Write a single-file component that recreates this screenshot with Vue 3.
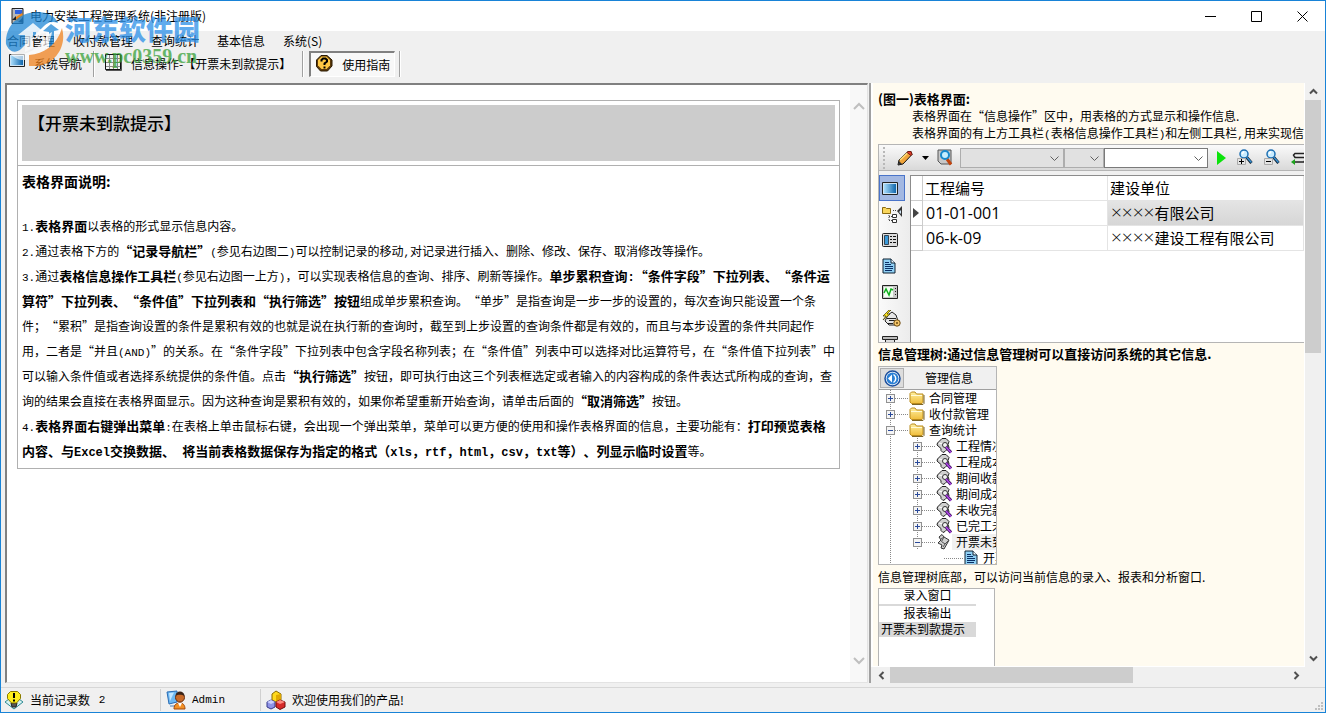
<template>
  <div class="win">
    <!-- Shared glyphs -->
    <svg class="defs" aria-hidden="true">
      <defs>
        <linearGradient id="g-blue" x1="0" y1="0" x2="1" y2="0">
          <stop offset="0" stop-color="#a9dcfa" />
          <stop offset="1" stop-color="#0f66ad" />
        </linearGradient>
        <linearGradient id="g-folder" x1="0" y1="0" x2="0" y2="1">
          <stop offset="0" stop-color="#fff0a0" />
          <stop offset="1" stop-color="#efbd3c" />
        </linearGradient>
        <symbol id="i-folder" viewBox="0 0 16 14">
          <path d="M1 11V2.5L2.5 1H6l1.5 2H14v8.5l-1 1H2.500z" fill="url(#g-folder)" stroke="#b98a1c" />
          <path d="M2 4.500H13" stroke="#fffbd8" />
          <path d="M15 4v8.500L14 13.500H3" fill="none" stroke="#7b6528" />
        </symbol>
        <symbol id="i-query" viewBox="0 0 16 16">
          <path d="M6 .5h4l3 3-1 3 1 3-4 4-2 1-2-2v-2L1 7l.5-2z" fill="#d0d0d0" stroke="#222" />
          <path d="M3 5l4 1 1 3" fill="none" stroke="#fff" />
          <circle cx="9" cy="7" r="2.500" fill="#f4f4f4" stroke="#333" />
          <path d="M10 9l5 5.500" stroke="#3b0a5c" stroke-width="3" />
          <path d="M10 9l5 5.500" stroke="#b14be8" stroke-width="1.500" />
        </symbol>
        <symbol id="i-scroll" viewBox="0 0 16 16">
          <path d="M3 3l3-2.500 2 2.500 5 3-1 2-4 7-3-1 1-3-4-2 3-3z" fill="#cfcfcf" stroke="#333" />
          <path d="M8 3L5.500 7.500 9 10l3-3M5 5l3-2M7 13l2-3" fill="none" stroke="#555" />
        </symbol>
        <symbol id="i-page" viewBox="0 0 14 16">
          <path d="M1 1h8l4 4v10H1z" fill="#8fd0f5" stroke="#123" />
          <path d="M9 1v4h4" fill="#e8f6ff" stroke="#123" />
          <path d="M3 4.500h4M3 6.500h6M3 8.500h8M3 10.500h8M3 12.500h7" stroke="#0a2f66" />
        </symbol>
        <symbol id="i-lens" viewBox="0 0 16 16">
          <path d="M9.500 8l5 6" stroke="#123" stroke-width="3" />
          <path d="M10 8.500l4.500 5" stroke="#3a93d6" stroke-width="1.500" />
          <circle cx="7" cy="5" r="4" fill="#c9ecff" stroke="#1d6fb3" stroke-width="1.500" />
          <path d="M5 5l2-2.500" stroke="#fff" stroke-width="1.500" />
        </symbol>
        <symbol id="i-screen" viewBox="0 0 16 13">
          <path d="M.5.500h15v12H.5z" fill="#cfe4f4" stroke="#222" />
          <path d="M2 2h12v9H2z" fill="url(#g-blue)" />
        </symbol>
      </defs>
    </svg>

    <header class="title-bar">
      <svg class="title-bar__icon" viewBox="0 0 13 16" aria-hidden="true">
        <path d="M1 .5h11v15H1z" fill="#b9b9b9" stroke="#222" />
        <path d="M4 1h7v5H4z" fill="#2f62e0" />
        <path d="M4 1h7v1H4z" fill="#cfe0ff" />
        <path d="M2 12l3-3 6-4 1 3-5 5z" fill="#f08a1c" />
        <path d="M1 12l4-4v4zM7 14l5-5v6z" fill="#222" />
      </svg>
      <span class="title-bar__text">电力安装工程管理系统(非注册版)</span>
      <button class="title-bar__btn" aria-label="最小化">
        <svg width="11" height="11" viewBox="0 0 11 11"><path d="M0 5.500h11" stroke="#000" /></svg>
      </button>
      <button class="title-bar__btn" aria-label="最大化">
        <svg width="11" height="11" viewBox="0 0 11 11"><path d="M.5.500h10v10H.5z" fill="none" stroke="#000" /></svg>
      </button>
      <button class="title-bar__btn" aria-label="关闭">
        <svg width="11" height="11" viewBox="0 0 11 11"><path d="M.5.500l10 10M10.500.500l-10 10" stroke="#000" /></svg>
      </button>
    </header>

    <nav class="menu-bar">
      <button v-for="item in menus" :key="item" class="menu-bar__item">{{ item }}</button>
    </nav>

    <div class="tool-bar">
      <button class="tool-bar__btn">
        <svg class="tool-bar__icon" width="16" height="13"><use href="#i-screen" /></svg>
        系统导航
      </button>
      <span class="tool-bar__sep"></span>
      <button class="tool-bar__btn">
        <svg class="tool-bar__icon" width="17" height="17" viewBox="0 0 17 17">
          <path d="M.5.500h15v15H.5z" fill="#f4f4f4" stroke="#111" />
          <path d="M1 4.500h14M1 8.500h14M1 12.500h14M4.500 1v14M8.500 1v14M12.500 1v14" stroke="#888" />
          <path d="M16.500 1v15.500H1" fill="none" stroke="#555" />
        </svg>
        信息操作-【开票未到款提示】
      </button>
      <span class="tool-bar__sep"></span>
      <button class="tool-bar__btn tool-bar__btn--pressed">
        <svg class="tool-bar__icon" width="17" height="17" viewBox="0 0 17 17">
          <path d="M5 .5h6L16 5v6l-4.500 5h-7L.5 11.500V5z" fill="#5d3a08" stroke="#2a1a04" />
          <path d="M5.500 1.500h5L14 5v5.500L10.500 14h-5L2 10.500V5z" fill="#ffc845" />
          <path d="M5.500 6.500V5L7 3.500h2.500L11 5v1.500L8.500 8.500V10M8.500 11.500v2" fill="none" stroke="#000" stroke-width="2" />
        </svg>
        使用指南
      </button>
      <span class="tool-bar__sep"></span>
    </div>

    <main class="panes">
      <section class="left">
        <article class="doc">
          <header class="doc__head"><h1 class="doc__title">【开票未到款提示】</h1></header>
          <div class="doc__body">
            <h2 class="doc__sub">表格界面说明:</h2>
            <p class="doc__text">
              <span class="en">1.</span><b>表格界面</b>以表格的形式显示信息内容。<br />
              <span class="en">2.</span>通过表格下方的<b>“记录导航栏”</b><span class="en">(</span>参见右边图二<span class="en">)</span>可以控制记录的移动<span class="en">,</span>对记录进行插入、删除、修改、保存、取消修改等操作。<br />
              <span class="en">3.</span>通过<b>表格信息操作工具栏</b><span class="en">(</span>参见右边图一上方<span class="en">)</span>，可以实现表格信息的查询、排序、刷新等操作。<b>单步累积查询<span class="en">:</span>“条件字段”下拉列表、“条件运</b><br />
              <b>算符”下拉列表、“条件值”下拉列表和“执行筛选”按钮</b>组成单步累积查询。“单步”是指查询是一步一步的设置的，每次查询只能设置一个条<br />
              件；“累积”是指查询设置的条件是累积有效的也就是说在执行新的查询时，截至到上步设置的查询条件都是有效的，而且与本步设置的条件共同起作<br />
              用，二者是“并且<span class="en">(AND)</span>”的关系。在“条件字段”下拉列表中包含字段名称列表；在“条件值”列表中可以选择对比运算符号，在“条件值下拉列表”中<br />
              可以输入条件值或者选择系统提供的条件值。点击<b>“执行筛选”</b>按钮，即可执行由这三个列表框选定或者输入的内容构成的条件表达式所构成的查询，查<br />
              询的结果会直接在表格界面显示。因为这种查询是累积有效的，如果你希望重新开始查询，请单击后面的<b>“取消筛选”</b>按钮。<br />
              <span class="en">4.</span><b>表格界面右键弹出菜单</b><span class="en">:</span>在表格上单击鼠标右键，会出现一个弹出菜单，菜单可以更方便的使用和操作表格界面的信息，主要功能有：<b>打印预览表格</b><br />
              <b>内容、与<span class="en">Excel</span>交换数据、<span class="en">&nbsp;</span>将当前表格数据保存为指定的格式（<span class="en">xls</span>，<span class="en">rtf</span>，<span class="en">html</span>，<span class="en">csv</span>，<span class="en">txt</span>等）、列显示临时设置</b>等。
            </p>
          </div>
        </article>
        <div class="left__scroll">
          <svg width="12" height="8" viewBox="0 0 12 8"><path d="M1 7l5-5 5 5" /></svg>
          <svg width="12" height="8" viewBox="0 0 12 8"><path d="M1 1l5 5 5-5" /></svg>
        </div>
      </section>

      <section class="right">
        <div class="guide">
          <h2 class="guide__title">(图一)表格界面:</h2>
          <p class="guide__line guide__line--indent">表格界面在“信息操作”区中，用表格的方式显示和操作信息.</p>
          <p class="guide__line guide__line--indent">表格界面的有上方工具栏<span class="en">(</span>表格信息操作工具栏<span class="en">)</span>和左侧工具栏<span class="en">,</span>用来实现信息操作</p>

          <div class="demo">
            <div class="demo__tools">
              <span class="demo__grip"></span>
              <button class="demo__tool demo__tool--pencil" aria-label="编辑">
                <svg width="16" height="16" viewBox="0 0 16 16">
                  <path d="M1 15l1-5 9-8.500h3l1 3L6 14z" fill="#f0a43a" stroke="#111" />
                  <path d="M3 10l8-7.500" stroke="#ffe07a" stroke-width="1.500" />
                  <path d="M11 1.500h3l1 3-1 1-4-3z" fill="#e0402c" stroke="#7a1a10" />
                  <path d="M1 15l1-4 3 3z" fill="#333" />
                </svg>
                <svg width="7" height="4" viewBox="0 0 7 4"><path d="M0 0h7L3.500 4z" fill="#000" /></svg>
              </button>
              <button class="demo__tool" aria-label="查找">
                <svg width="16" height="17" viewBox="0 0 16 17">
                  <path d="M1 1h13v14H4l-3-3z" fill="#c8c8c8" stroke="#555" />
                  <path d="M10 10l4 5.500" stroke="#c2440e" stroke-width="3" />
                  <circle cx="8" cy="6" r="4" fill="#c6efff" stroke="#1789cc" stroke-width="2" />
                </svg>
              </button>
              <div class="demo__combos">
                <span class="combo combo--field">
                  <select aria-label="条件字段" disabled></select>
                  <svg viewBox="0 0 9 6"><path d="M.5.500l4 4 4-4" /></svg>
                </span>
                <span class="combo combo--op">
                  <select aria-label="条件运算符" disabled></select>
                  <svg viewBox="0 0 9 6"><path d="M.5.500l4 4 4-4" /></svg>
                </span>
                <span class="combo combo--value">
                  <select aria-label="条件值"></select>
                  <svg viewBox="0 0 9 6"><path d="M.5.500l4 4 4-4" /></svg>
                </span>
              </div>
              <button class="demo__tool" aria-label="执行筛选">
                <svg width="9" height="14" viewBox="0 0 9 14"><path d="M0 0l9 7-9 7z" fill="#0be30b" /></svg>
              </button>
              <button class="demo__tool demo__tool--wide" aria-label="累积筛选">
                <svg width="16" height="17" viewBox="0 0 16 17">
                  <use href="#i-lens" width="16" height="16" />
                  <path d="M.5 9.500h8v6h-8z" fill="#e4e4e4" stroke="#aaa" />
                  <path d="M2 12.500h5M4.500 10v5" stroke="#000" />
                </svg>
              </button>
              <button class="demo__tool demo__tool--wide" aria-label="取消筛选">
                <svg width="16" height="17" viewBox="0 0 16 17">
                  <use href="#i-lens" width="16" height="16" />
                  <path d="M.5 9.500h8v6h-8z" fill="#e4e4e4" stroke="#aaa" />
                  <path d="M2 12.500h5" stroke="#000" />
                </svg>
              </button>
              <button class="demo__tool demo__tool--wide" aria-label="刷新">
                <svg width="16" height="14" viewBox="0 0 16 14">
                  <path d="M15 2.500H4L2.500 4 4 6.500h9l1.500 1.500-1.500 3H3" fill="none" stroke="#222" stroke-width="1.500" />
                  <path d="M4 8v6L0 11z" fill="#1ea31e" />
                </svg>
              </button>
            </div>

            <div class="demo__main">
              <div class="side">
                <button class="side__btn side__btn--on" aria-label="表格">
                  <svg width="16" height="13"><use href="#i-screen" /></svg>
                </button>
                <button class="side__btn" aria-label="结构">
                  <svg width="20" height="17" viewBox="0 0 20 17">
                    <path d="M.5 1.500h3l1 1h4v5h-8z" fill="#f9d65c" stroke="#8a6a10" />
                    <path d="M11 4.500h4M7 9v6M7 10.500h3M7 14.500h3" stroke="#444" stroke-dasharray="1 1" />
                    <path d="M10.500 8.500h4v3h-4zM10.500 13.500h4v3h-4z" fill="#fff" stroke="#333" />
                    <path d="M20 0l-5 5 5 6z" fill="#333" />
                    <path d="M19 4v4l-2-2z" fill="#cfe4f4" />
                  </svg>
                </button>
                <button class="side__btn" aria-label="卡片">
                  <svg width="16" height="14" viewBox="0 0 16 14">
                    <rect x=".5" y=".5" width="15" height="13" rx="1" fill="#dcdcdc" stroke="#222" />
                    <path d="M2.500 2.500h4v9h-4z" fill="#3b9ad9" stroke="#345" />
                    <path d="M8 3.500h2M11 3.500h3M8 6.500h2M11 6.500h3M8 9.500h2M11 9.500h3" stroke="#111" />
                  </svg>
                </button>
                <button class="side__btn" aria-label="报表">
                  <svg width="14" height="16"><use href="#i-page" /></svg>
                </button>
                <button class="side__btn" aria-label="图表">
                  <svg width="16" height="14" viewBox="0 0 16 14">
                    <path d="M.5.500h15v13H.5z" fill="#c9c9c9" stroke="#222" />
                    <path d="M2 2h9v10H2z" fill="#f2fff2" />
                    <path d="M2 8l2-4 3 6 2-6 2 1" fill="none" stroke="#0fae1c" stroke-width="1.500" />
                    <path d="M13.500 3v7" stroke="#222" stroke-dasharray="1 2" />
                  </svg>
                </button>
                <button class="side__btn" aria-label="打印">
                  <svg width="19" height="17" viewBox="0 0 19 17">
                    <path d="M6 5l4-3 4 3 2 6-3 4H7l-4-4z" fill="#e6e6e6" stroke="#222" />
                    <path d="M5 8.500h9M7 10.500h6M6 13.500h5" stroke="#222" />
                    <path d="M7 0L1 6h3L1 10l7-6H5l4-4z" fill="#ffe520" stroke="#3a3200" stroke-width=".7" />
                    <circle cx="15" cy="13" r="3.200" fill="#f5c66a" stroke="#6b4a12" />
                    <circle cx="15" cy="13" r="1" fill="#6b4a12" />
                  </svg>
                </button>
                <button class="side__btn" aria-label="导出">
                  <svg width="16" height="16" viewBox="0 0 16 16">
                    <path d="M.5.500h15v3H.5z" fill="#bbb" stroke="#222" />
                    <path d="M3.500 3.500h9v12h-9z" fill="#ddd" stroke="#222" />
                    <path d="M5 6.500h6M5 8.500h6" stroke="#444" />
                  </svg>
                </button>
              </div>

              <div class="grid">
                <table class="grid__table">
                  <thead>
                    <tr><th class="grid__mark"></th><th class="grid__code">工程编号</th><th>建设单位</th></tr>
                  </thead>
                  <tbody>
                    <tr v-for="(row, i) in rows" :key="row.code">
                      <td class="grid__mark">
                        <svg v-if="i === 0" width="6" height="10" viewBox="0 0 6 10"><path d="M0 0l6 5-6 5z" fill="#444" /></svg>
                      </td>
                      <td class="grid__code">{{ row.code }}</td>
                      <td class="grid__unit" :class="{ 'grid__unit--on': i === 0 }"><span class="grid__x">××××</span>{{ row.unit }}</td>
                    </tr>
                  </tbody>
                </table>
              </div>
            </div>
          </div>

          <h2 class="guide__title guide__title--tight">信息管理树:通过信息管理树可以直接访问系统的其它信息.</h2>

          <div class="tree">
            <div class="tree__head">
              <button class="tree__back" aria-label="返回">
                <svg width="17" height="17" viewBox="0 0 17 17">
                  <circle cx="8.500" cy="8.500" r="7.500" fill="#fff" stroke="#1c4f9e" stroke-width="1.500" />
                  <circle cx="8.500" cy="8.500" r="6" fill="#2b7fd4" />
                  <path d="M8 4.500v8l-4-4z" fill="#fff" />
                  <path d="M9.500 4.500c3 2 3 6 0 8" fill="none" stroke="#fff" stroke-width="1.500" />
                </svg>
              </button>
              <span class="tree__caption">管理信息</span>
            </div>
            <ul class="tree__list">
              <li v-for="node in tree" :key="node.text + node.level" class="tree__row" :class="['tree__row--l' + node.level, { 'tree__row--on': node.on }]">
                <span v-if="node.level < 2" class="tree__box"><i v-if="!node.open"></i></span>
                <span class="tree__dots"></span>
                <svg class="tree__icon"><use :href="'#i-' + node.icon" /></svg>
                <span class="tree__text">{{ node.text }}</span>
              </li>
            </ul>
          </div>

          <p class="guide__line guide__line--foot">信息管理树底部，可以访问当前信息的录入、报表和分析窗口.</p>

          <ul class="links">
            <li class="links__item">录入窗口</li>
            <li class="links__item links__item--line">报表输出</li>
            <li class="links__item links__item--on">开票未到款提示</li>
          </ul>
        </div>

        <div class="bar bar--v">
          <svg width="9" height="7" viewBox="0 0 9 7"><path d="M1 5.500L4.500 2 8 5.500" /></svg>
          <div class="bar__track"><div class="bar__thumb"></div></div>
          <svg width="9" height="7" viewBox="0 0 9 7"><path d="M1 1.500L4.500 5 8 1.500" /></svg>
        </div>
        <div class="bar bar--h">
          <svg width="7" height="9" viewBox="0 0 7 9"><path d="M5.500 1L2 4.500 5.500 8" /></svg>
          <div class="bar__track"><div class="bar__thumb"></div></div>
          <svg width="7" height="9" viewBox="0 0 7 9"><path d="M1.500 1L5 4.500 1.500 8" /></svg>
        </div>
      </section>
    </main>

    <footer class="status">
      <div class="status__cell">
        <svg width="20" height="20" viewBox="0 0 20 20">
          <path d="M1 12l4-3h10l4 3-9 7z" fill="#d6f3f3" stroke="#2f8a93" />
          <path d="M7 13h6l-1 4H8z" fill="#555" stroke="#222" />
          <path d="M6.500 1.500h7l3 3v4l-4 4.500h-5L3.500 8.500v-4z" fill="#ffee1c" stroke="#8a7a00" />
          <path d="M10 3v5M10 9.500v2" stroke="#000" stroke-width="2" />
        </svg>
        当前记录数&nbsp;<span class="en">2</span>
      </div>
      <div class="status__cell">
        <svg width="20" height="20" viewBox="0 0 20 20">
          <path d="M1 2l10-1v11L3 14z" fill="#6db8f2" stroke="#2a6cb4" />
          <path d="M3 3l5-.5L4 11z" fill="#c3e6ff" />
          <path d="M4 15h6v2H4z" fill="#9db8d6" />
          <path d="M8 19c0-5 3-6 6-6s5 2 5 6z" fill="#f39024" stroke="#a3480a" />
          <path d="M12 13l2 4 2-4z" fill="#fff" />
          <circle cx="14" cy="7.500" r="4.500" fill="#c96a28" stroke="#6b2d0a" />
          <path d="M9.500 6c0-6 9-6 9 0-2-1-6-2-9 0z" fill="#3c2418" />
        </svg>
        <span class="en">Admin</span>
      </div>
      <div class="status__cell status__cell--grow">
        <svg width="20" height="20" viewBox="0 0 20 20">
          <path d="M6 4l4-3 5 3v6l-5 2-4-2z" fill="#ffd91c" stroke="#8a6a00" />
          <path d="M10 5l5-1v6l-5 2z" fill="#e0a800" />
          <path d="M1 12l4-2 4 2v5l-4 2-4-2z" fill="#8f93e6" stroke="#35388a" />
          <path d="M1 12l4 2 4-2-4-2z" fill="#ccd0ff" />
          <path d="M10 12l4-2 5 2v5l-5 2.500-4-2.500z" fill="#d62a2a" stroke="#6e0d0d" />
          <path d="M10 12l4 2 5-2-5-2z" fill="#ff8a80" />
        </svg>
        欢迎使用我们的产品!
      </div>
      <svg class="status__grip" width="9" height="9" viewBox="0 0 9 9">
        <path d="M6 0h2v2H6zM3 3h2v2H3zM6 3h2v2H6zM0 6h2v2H0zM3 6h2v2H3zM6 6h2v2H6z" fill="#bfbfbf" />
      </svg>
    </footer>

    <!-- Site stamp lying over the title and menu -->
    <div class="stamp">
      <svg class="stamp__logo" width="60" height="58" viewBox="0 0 60 58">
        <path d="M1 33C0 15 14 1 32 1c11 0 18 4 21 11-5-2-10-1-14 3L16 38c-6 5-12 3-15-5z" fill="#1f87d6" />
        <path d="M13 24l15-12 12 10-5 1v4h-4v-6h-3v16l-8 4V24z" fill="#fff" opacity=".85" />
        <path d="M36 21l9-10 12 8-2 4h-5v14l-9 5V22z" fill="#fff" />
        <path d="M38 20l8-7 8 6-5 1v15l-5 3V21z" fill="#1f87d6" />
        <path d="M2 36c7 11 24 9 36-6 3-4 6-8 9-9-3 18-15 29-30 28C9 48 4 43 2 36z" fill="#fff" opacity=".85" />
        <path d="M57 17c5 18-6 35-24 38h-9V44c15-1 28-10 33-27z" fill="#f08320" />
      </svg>
      <div class="stamp__words">
        <span class="stamp__name">河东软件园</span>
        <span class="stamp__url">www.pc0359.cn</span>
      </div>
    </div>
  </div>
</template>

<script setup>
const menus = ['合同管理', '收付款管理', '查询统计', '基本信息', '系统(S)']

const rows = [
  { code: '01-01-001', unit: '有限公司' },
  { code: '06-k-09', unit: '建设工程有限公司' },
]

const tree = [
  { level: 0, icon: 'folder', text: '合同管理' },
  { level: 0, icon: 'folder', text: '收付款管理' },
  { level: 0, icon: 'folder', text: '查询统计', open: true },
  { level: 1, icon: 'query', text: '工程情况' },
  { level: 1, icon: 'query', text: '工程成本' },
  { level: 1, icon: 'query', text: '期间收款' },
  { level: 1, icon: 'query', text: '期间成本' },
  { level: 1, icon: 'query', text: '未收完款' },
  { level: 1, icon: 'query', text: '已完工未' },
  { level: 1, icon: 'scroll', text: '开票未到', open: true, on: true },
  { level: 2, icon: 'page', text: '开票' },
]
</script>

<style>
body {
  margin: 0;
}
</style>

<style scoped>
.win, .win * {
  box-sizing: border-box;
}
.win {
  position: relative;
  display: flex;
  flex-direction: column;
  height: 100vh;
  min-height: 600px;
  border: 1px solid #1883d7;
  background: #f0f0f0;
  color: #000;
  font: 12px/16px 'Noto Sans CJK SC', sans-serif;
  text-spacing-trim: space-all;
  white-space: nowrap;
  overflow: hidden;
}
.defs {
  position: absolute;
  width: 0;
  height: 0;
}
button {
  margin: 0;
  padding: 0;
  border: 0;
  background: none;
  color: inherit;
  font: inherit;
}
svg {
  display: block;
  flex: none;
}
h1, h2, p, ul {
  margin: 0;
  padding: 0;
  list-style: none;
}
/* Zero line height keeps mixed runs from stretching their line */
.en {
  font-family: 'Liberation Mono', monospace;
  font-size: 11px;
  line-height: 0;
}
b .en {
  font-size: 12px;
}

/* Title, menu and tool bars */
.title-bar {
  display: flex;
  align-items: center;
  height: 30px;
  padding-left: 10px;
  background: #fff;
}
.title-bar__icon {
  width: 13px;
  height: 16px;
}
.title-bar__text {
  flex: 1;
  padding-left: 6px;
}
.title-bar__btn {
  display: flex;
  justify-content: center;
  width: 46px;
}
.menu-bar {
  display: flex;
  gap: 18px;
  align-items: center;
  height: 20px;
  padding-left: 6px;
}
.tool-bar {
  display: flex;
  align-items: flex-start;
  height: 32px;
  padding-left: 8px;
}
.tool-bar__btn {
  display: flex;
  gap: 9px;
  align-items: flex-start;
  height: 26px;
  padding: 5px 11px 0 0;
}
.tool-bar__icon {
  margin-top: -2px;
}
.tool-bar__sep {
  width: 2px;
  height: 26px;
  border-left: 1px solid #a0a0a0;
  border-right: 1px solid #fff;
}
.tool-bar__sep + .tool-bar__btn {
  padding-left: 10px;
}
.tool-bar__sep + .tool-bar__btn--pressed {
  margin: 0 4px 0 5px;
  padding: 4px 4px 0 5px;
  border: 1px solid #fff;
  border-top: 2px solid #808080;
  border-left: 2px solid #808080;
  background: #f8f8f8;
}

/* Two panes */
.panes {
  display: grid;
  grid-template-columns: minmax(0, 863fr) minmax(0, 456fr);
  gap: 1px;
  flex: 1;
  min-height: 0;
  padding: 0 0 4px 4px;
}
.left {
  display: flex;
  min-height: 0;
  border: 1px solid #e3e3e3;
  border-top: 2px solid #808080;
  border-left: 2px solid #808080;
  background: #fff;
}
.left__scroll {
  display: flex;
  flex-direction: column;
  justify-content: space-between;
  align-items: center;
  width: 17px;
  padding: 17px 0;
  background: #f8f8f8;
}
.left__scroll path {
  fill: none;
  stroke: #bfbfbf;
  stroke-width: 2;
}
.doc {
  flex: 1;
  align-self: flex-start;
  min-width: 0;
  margin: 15px 10px 0;
  border: 1px solid #b0b0b0;
}
.doc__head {
  padding: 4px;
  border-bottom: 1px solid #b0b0b0;
}
.doc__title {
  height: 56px;
  padding: 6px;
  background: #ccc;
  font-size: 17px;
  line-height: 24px;
  font-weight: 500;
}
.doc__body {
  padding: 3px 4px 5px;
}
.doc__sub {
  margin-bottom: 20px;
  font-size: 14px;
  line-height: 24px;
}
.doc__text {
  line-height: 25px;
}
.doc__text b {
  font-size: 13px;
  line-height: 0;
}

/* Guide pane */
.right {
  display: grid;
  grid-template-columns: minmax(0, 1fr) 16px;
  grid-template-rows: minmax(0, 1fr) 16px;
  min-height: 0;
  padding-right: 4px;
  border-left: 2px solid #a0a0a0;
}
.guide {
  padding: 8px 0 0 5px;
  border-left: 2px solid #fff;
  border-right: 1px solid #fff;
  border-bottom: 1px solid #fff;
  background: #fffbf0;
  overflow: hidden;
}
.guide__title {
  font-size: 13px;
  line-height: 16px;
}
.guide__title--tight {
  height: 23px;
  padding-top: 3px;
}
.guide__line {
  line-height: 17px;
}
.guide__line--indent {
  padding-left: 34px;
}
.guide__line--foot {
  padding: 3px 0;
}
.demo {
  height: 199px;
  margin-top: 3px;
  border: 1px solid #b5b5b5;
  border-right: 0;
  background: #f0f0f0;
  overflow: hidden;
}
.demo__tools {
  display: flex;
  align-items: center;
  height: 26px;
  border-bottom: 1px solid #b5b5b5;
  background: linear-gradient(#fafafa, #d9d9d9);
}
.demo__grip {
  width: 2px;
  height: 22px;
  margin: 0 12px 0 4px;
  border-left: 2px dotted #b8b8b8;
}
.demo__tool--pencil {
  display: flex;
  gap: 9px;
  align-items: center;
  margin-right: 8px;
}
.demo__combos {
  display: flex;
  margin: 0 9px 0 7px;
}
.combo {
  position: relative;
  height: 20px;
}
.combo select {
  display: block;
  width: 100%;
  height: 100%;
  border: 1px solid #adadad;
  border-radius: 0;
  background: #e1e1e1;
  appearance: none;
  opacity: 1;
}
.combo svg {
  position: absolute;
  top: 8px;
  right: 5px;
  width: 9px;
  height: 6px;
  pointer-events: none;
}
.combo path {
  fill: none;
  stroke: #606060;
}
.combo--field {
  width: 104px;
}
.combo--op {
  width: 40px;
}
.combo--value {
  width: 104px;
}
.combo--value select {
  border-color: #7a7a7a;
  background: #fff;
}
.demo__tool--wide {
  margin-left: 11px;
}
.demo__main {
  display: flex;
  height: 172px;
  padding-top: 4px;
}
.side {
  width: 31px;
  background: linear-gradient(90deg, #fafafa, #ececec);
}
.side__btn {
  display: flex;
  align-items: center;
  width: 26px;
  height: 26px;
  padding-left: 2px;
  border: 1px solid transparent;
}
.side__btn--on {
  border-color: #4a74c9;
  background: #a3b8e2;
}
.grid {
  flex: 1;
  min-width: 0;
  border-top: 1px solid #8c8c8c;
  border-left: 1px solid #8c8c8c;
  background: #fff;
  overflow: hidden;
}
.grid__table {
  width: 100%;
  border-collapse: separate;
  border-spacing: 0;
  table-layout: fixed;
  font-size: 15px;
  line-height: 24px;
}
.grid__table th,
.grid__table td {
  height: 25px;
  padding: 0 2px;
  border-right: 1px solid #e4e4e4;
  border-bottom: 1px solid #e4e4e4;
  font-weight: 400;
  text-align: left;
}
.grid__table .grid__mark {
  width: 12px;
  border-color: #ccc;
}
.grid__table .grid__code {
  width: 185px;
}
.grid__table td.grid__code {
  padding-left: 3px;
  font-family: 'Open Sans', sans-serif;
  font-size: 16px;
}
.grid__table .grid__unit {
  padding-left: 3px;
}
.grid__table .grid__unit--on {
  background: linear-gradient(#e4e4e4, #d6d6d6);
}
.grid__x {
  font-family: 'Open Sans', sans-serif;
  font-size: 19px;
  font-weight: 300;
  line-height: 16px;
}

/* Tree */
.tree {
  width: 119px;
  height: 199px;
  border: 1px solid #b5b5b5;
  background: #fff;
  overflow: hidden;
}
.tree__head {
  display: flex;
  align-items: center;
  height: 23px;
  border-bottom: 1px solid #a0a0a0;
  background: #f0f0f0;
}
.tree__back {
  display: flex;
  align-items: center;
  justify-content: center;
  width: 24px;
  height: 20px;
  margin-left: 1px;
  border: 1px solid #b0b0b0;
  background: #ddd;
}
.tree__caption {
  padding-left: 21px;
}
.tree__list {
  padding-left: 7px;
  background: repeating-linear-gradient(#888 0 1px, transparent 1px 2px) 11px 0 / 1px 100% no-repeat;
}
.tree__row {
  display: flex;
  align-items: center;
  height: 16px;
}
.tree__row--l1 {
  padding-left: 27px;
  background: repeating-linear-gradient(#888 0 1px, transparent 1px 2px) 31px 0 / 1px 100% no-repeat;
}
.tree__row--l2 {
  padding-left: 58px;
}
.tree__box {
  position: relative;
  flex: none;
  width: 9px;
  height: 9px;
  border: 1px solid #919191;
  background: #f4f4f4;
}
.tree__box::before,
.tree__box i {
  position: absolute;
  top: 3px;
  left: 1px;
  width: 5px;
  height: 1px;
  background: #2a4a9a;
  content: '';
}
.tree__box i {
  transform: rotate(90deg);
}
.tree__dots {
  flex: none;
  width: 14px;
  height: 1px;
  background: repeating-linear-gradient(90deg, #888 0 1px, transparent 1px 2px);
}
.tree__row--l2 .tree__dots {
  width: 19px;
}
.tree__icon {
  width: 16px;
  height: 16px;
}
.tree__text {
  padding-left: 4px;
}
.tree__row--on .tree__text {
  flex: 1;
  background: #f0f0f0;
}
.links {
  width: 117px;
  height: 90px;
  border: 1px solid #b5b5b5;
  background: #fff;
}
.links__item {
  width: 97px;
  height: 15px;
  line-height: 12px;
  text-align: center;
}
.links__item--line {
  height: 18px;
  border-top: 2px solid #d9d9d9;
  line-height: 14px;
}
.links__item--on {
  padding-left: 2px;
  background: #d9d9d9;
  line-height: 14px;
  text-align: left;
}

/* Scroll bars */
.bar {
  display: flex;
  align-items: center;
}
.bar path {
  fill: none;
  stroke: #505050;
  stroke-width: 2;
}
.bar__track {
  flex: 1;
}
.bar__thumb {
  background: #cdcdcd;
}
.bar--v {
  flex-direction: column;
  gap: 5px;
  padding: 5px 0;
}
.bar--v .bar__track,
.bar--h .bar__thumb {
  width: 100%;
}
.bar--v .bar__thumb {
  height: 46%;
}
.bar--h {
  gap: 5px;
  padding: 0 5px 0 7px;
}
.bar--h .bar__track,
.bar--h .bar__thumb {
  height: 16px;
}
.bar--h .bar__thumb {
  width: 61%;
}

/* Status bar */
.status {
  display: flex;
  align-items: center;
  height: 25px;
  border-top: 1px solid #d7d7d7;
}
.status__cell {
  display: flex;
  gap: 6px;
  align-items: center;
  width: 100px;
  height: 22px;
  padding-left: 5px;
  border-right: 1px solid #d0d0d0;
}
.status__cell:first-child {
  width: 160px;
  padding-left: 3px;
}
.status__cell--grow {
  flex: 1;
  border-right: 0;
}
.status__grip {
  align-self: flex-end;
  margin: 0 1px 1px 0;
}

/* Stamp */
.stamp {
  position: absolute;
  top: 10px;
  left: 4px;
  display: flex;
  opacity: 0.75;
  pointer-events: none;
}
.stamp__words {
  display: flex;
  flex-direction: column;
}
.stamp__name {
  color: #2b8fe8;
  font-size: 27px;
  line-height: 36px;
  font-weight: 900;
}
.stamp__url {
  color: #3aa23a;
  font: 700 20px/18px 'Liberation Serif', serif;
}
</style>
